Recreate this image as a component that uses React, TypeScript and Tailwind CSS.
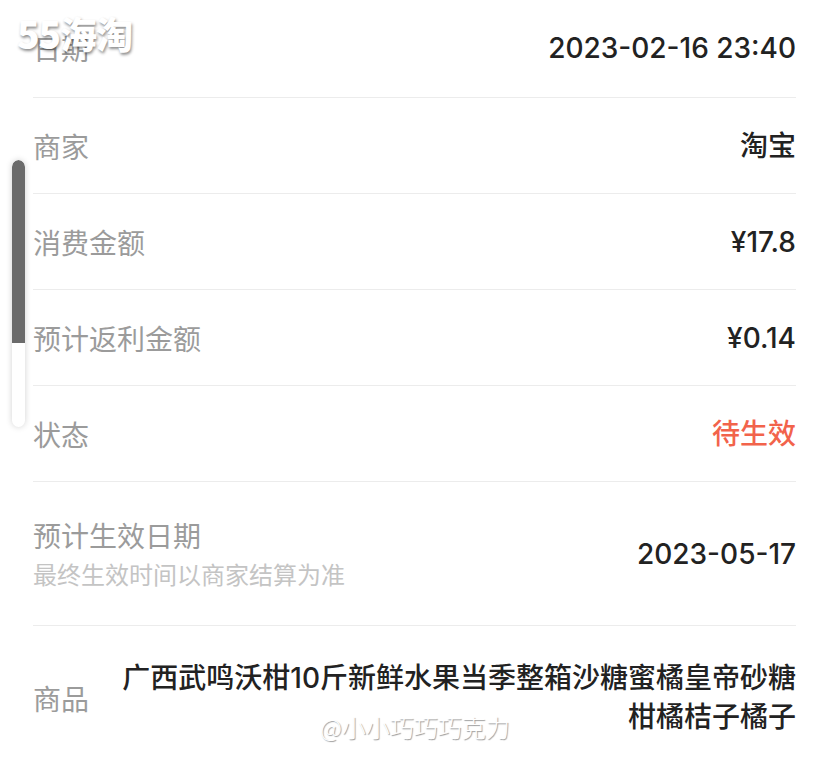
import React from 'react'

const font = { fontFamily: '"Noto Sans CJK SC", "Noto Sans", sans-serif' }
// digits in the screenshot are wider than the CJK font's, Inter gets closer
const valueFont = { fontFamily: 'Inter, "Noto Sans CJK SC", sans-serif' }

type Row = { label: string; value: string; tone?: 'warn' }

const rows: Row[] = [
  { label: '商家', value: '淘宝' },
  { label: '消费金额', value: '¥17.8' },
  { label: '预计返利金额', value: '¥0.14' },
  { label: '状态', value: '待生效', tone: 'warn' },
]

function InfoRow({ label, value, tone }: Row) {
  return (
    <div className="flex h-[96px] items-center justify-between border-b border-[#ececec]">
      <span className="text-[28px] text-[#9b9b9b]">{label}</span>
      <span
        style={valueFont}
        className={
          tone === 'warn'
            ? 'text-[28px] font-medium text-[#f2634b]'
            : 'text-[28px] font-medium text-[#222]'
        }
      >
        {value}
      </span>
    </div>
  )
}

export default function App() {
  return (
    <div className="relative h-[766px] w-[828px] overflow-hidden bg-white" style={font}>
      <div className="pl-[33px] pr-[32px]">
        {/* date row, partially under the watermark */}
        <div className="flex h-[98px] items-center justify-between border-b border-[#ececec] pb-[2px]">
          <span className="text-[28px] text-[#9b9b9b]">日期</span>
          <span style={valueFont} className="text-[28px] font-medium text-[#222]">
            2023-02-16 23:40
          </span>
        </div>

        {rows.map((r) => (
          <InfoRow key={r.label} {...r} />
        ))}

        {/* estimated effective date */}
        <div className="flex h-[144px] items-center justify-between border-b border-[#ececec]">
          <div className="flex flex-col gap-[4px]">
            <span className="text-[28px] leading-[36px] text-[#9b9b9b]">预计生效日期</span>
            <span className="text-[24px] leading-[34px] text-[#c4c4c4]">最终生效时间以商家结算为准</span>
          </div>
          <span style={valueFont} className="text-[28px] font-medium text-[#222]">
            2023-05-17
          </span>
        </div>

        {/* product */}
        <div className="flex items-center justify-between gap-6 pt-[33px]">
          <span className="shrink-0 text-[28px] text-[#9b9b9b]">商品</span>
          <span style={valueFont} className="text-right text-[28px] font-medium leading-[39px] text-[#222]">
            广西武鸣沃柑10斤新鲜水果当季整箱沙糖蜜橘皇帝砂糖
            <br />
            柑橘桔子橘子
          </span>
        </div>
      </div>

      {/* scroll indicator */}
      <div className="absolute left-[12px] top-[160px] flex h-[267px] w-[13px] flex-col overflow-hidden rounded-full bg-white shadow-[0_0_6px_rgba(0,0,0,0.18)]">
        <div className="h-[183px] rounded-t-full bg-[#6b6b6b]" />
      </div>

      {/* watermarks */}
      <div className="absolute left-[17px] top-[6px] text-[37px] font-black tracking-[-1px] text-white [text-shadow:1px_2px_3px_rgba(0,0,0,0.45)]">
        55海淘
      </div>
      <div className="absolute left-[320px] top-[709px] text-[24px] font-light text-white [text-shadow:1px_1px_1px_rgba(0,0,0,0.4)]">
        @小小巧巧巧克力
      </div>
    </div>
  )
}
